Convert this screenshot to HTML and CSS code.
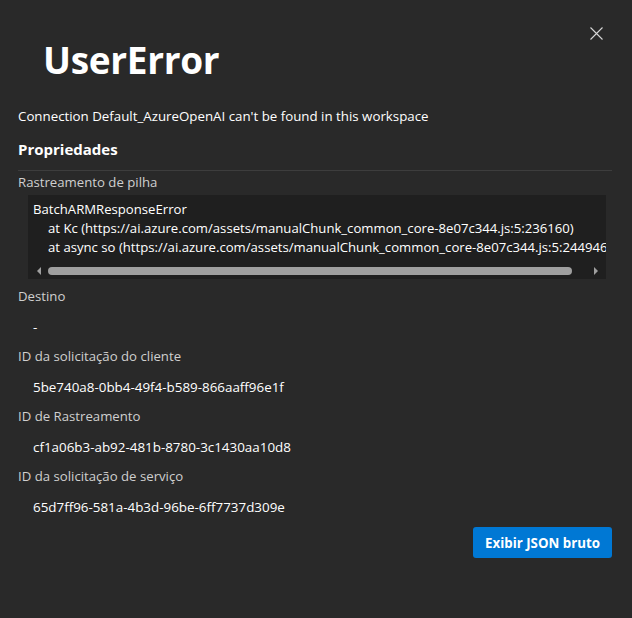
FILE: index.html
```html
<!DOCTYPE html>
<html lang="pt">
<head>
<meta charset="utf-8">
<title>UserError</title>
<link rel="stylesheet" href="styles.css">
</head>
<body>
<div class="panel">
  <button class="close" aria-label="Fechar">
    <svg width="13" height="13" viewBox="0 0 13 13"><path d="M0.5 0.5 L12.5 12.5 M12.5 0.5 L0.5 12.5" stroke="#d6d6d6" stroke-width="1.1" fill="none"/></svg>
  </button>
  <h1 class="title">UserError</h1>
  <p class="message">Connection Default_AzureOpenAI can't be found in this workspace</p>
  <h2 class="section">Propriedades</h2>
  <div class="props">
    <div class="label">Rastreamento de pilha</div>
    <div class="code">
      <div class="code-text">
        <div>BatchARMResponseError</div>
        <div class="indent">at Kc (https://ai.azure.com/assets/manualChunk_common_core-8e07c344.js:5:236160)</div>
        <div class="indent">at async so (https://ai.azure.com/assets/manualChunk_common_core-8e07c344.js:5:244946)</div>
      </div>
      <div class="scrollbar">
        <span class="arrow left"></span>
        <span class="thumb"></span>
        <span class="arrow right"></span>
      </div>
    </div>
    <div class="label">Destino</div>
    <div class="value">-</div>
    <div class="label">ID da solicitação do cliente</div>
    <div class="value">5be740a8-0bb4-49f4-b589-866aaff96e1f</div>
    <div class="label">ID de Rastreamento</div>
    <div class="value">cf1a06b3-ab92-481b-8780-3c1430aa10d8</div>
    <div class="label">ID da solicitação de serviço</div>
    <div class="value">65d7ff96-581a-4b3d-96be-6ff7737d309e</div>
  </div>
  <div class="actions">
    <button class="primary">Exibir JSON bruto</button>
  </div>
</div>
</body>
</html>
```

FILE: styles.css
```css
html, body {
  margin: 0;
  padding: 0;
  background: #292929;
}
body {
  font-family: "Open Sans", "Noto Sans", sans-serif;
  color: #ffffff;
  width: 632px;
  height: 618px;
  overflow: hidden;
}
.panel {
  position: relative;
  padding: 0 20px 0 18px;
}
.close {
  position: absolute;
  top: 27px;
  left: 590px;
  width: 13px;
  height: 13px;
  padding: 0;
  border: 0;
  background: none;
  display: block;
}
.close svg { display: block; }
.title {
  margin: 0;
  padding: 36px 0 0 25px;
  height: 56px;
  font-size: 37px;
  line-height: 48px;
  font-weight: 700;
  letter-spacing: -0.3px;
  color: #ffffff;
}
.message {
  margin: 14px 0 0;
  font-size: 13.3px;
  line-height: 20px;
  color: #ffffff;
}
.section {
  margin: 12px 0 0;
  font-size: 15px;
  line-height: 22px;
  font-weight: 700;
  padding-bottom: 10px;
  border-bottom: 1px solid #3d3d3d;
}
.props {
  display: flex;
  flex-direction: column;
}
.label {
  font-size: 13.2px;
  line-height: 20px;
  color: #cfcfcf;
  padding: 2px 0 0;
  height: 28px;
  box-sizing: border-box;
}
.props .label:first-child {
  height: 24px;
  padding-top: 1px;
}
.value {
  font-size: 13.4px;
  line-height: 20px;
  color: #ffffff;
  padding: 5px 0 0 15px;
  height: 32px;
  box-sizing: border-box;
}
.code {
  margin: 0 6px 5px 10px;
  background: #1f1f1f;
  overflow: hidden;
}
.code-text {
  padding: 5px 0 5px 5px;
  font-size: 13.15px;
  line-height: 19px;
  white-space: nowrap;
  color: #ffffff;
}
.code-text .indent {
  padding-left: 15px;
}
.scrollbar {
  height: 17px;
  display: flex;
  align-items: center;
  padding: 0 8px 0 9px;
  gap: 7px;
}
.thumb {
  flex: 1;
  height: 8px;
  border-radius: 4px;
  background: #9f9f9f;
  margin-right: 15px;
}
.arrow {
  width: 0;
  height: 0;
  border-top: 4px solid transparent;
  border-bottom: 4px solid transparent;
}
.arrow.left {
  border-right: 4px solid #9f9f9f;
}
.arrow.right {
  border-left: 4px solid #9f9f9f;
}
.actions {
  display: flex;
  justify-content: flex-end;
  margin-top: 3px;
}
.primary {
  font-family: inherit;
  font-size: 13.3px;
  font-weight: 700;
  color: #ffffff;
  background: #0078d4;
  border: 0;
  border-radius: 3px;
  width: 139px;
  height: 31px;
  padding: 0;
}
```
